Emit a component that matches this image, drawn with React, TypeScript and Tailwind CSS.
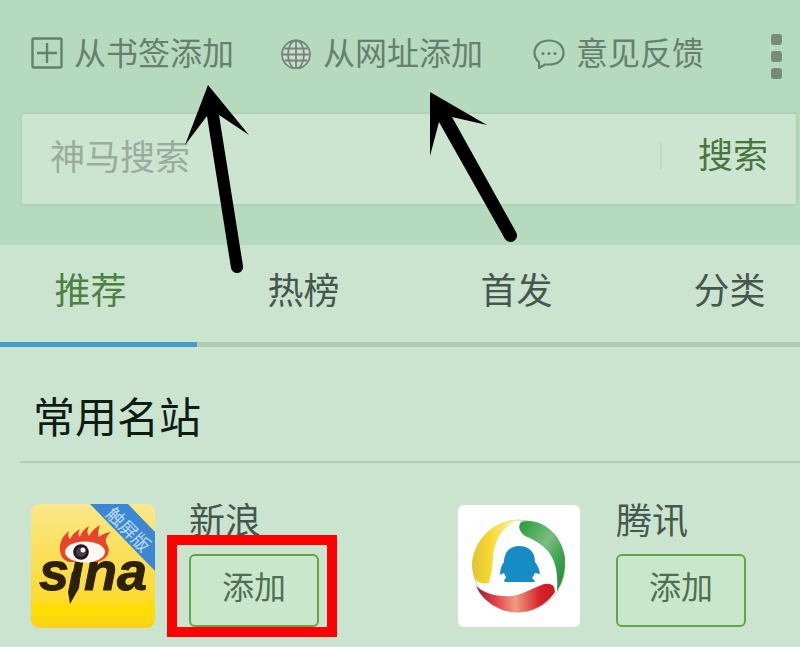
import type { ReactNode } from "react";

function AddSquareIcon() {
  return (
    <svg className="size-8 shrink-0" viewBox="0 0 32 32" fill="none" stroke="currentColor" strokeWidth="2.4" aria-hidden="true">
      <rect x="1.5" y="1.5" width="29" height="29" rx="1.5" />
      <path d="M16 6v20M6 16h20" />
    </svg>
  );
}

function GlobeIcon() {
  return (
    <svg className="size-8 shrink-0" viewBox="0 0 32 32" fill="none" stroke="#738779" strokeWidth="1.8" aria-hidden="true">
      <circle cx="16" cy="17.5" r="14" fill="#cbdccf" />
      <path d="M16 3.500v28M2 17.500h28M4.500 11.500h23M4.500 23.500h23" />
      <ellipse cx="16" cy="17.500" rx="8" ry="14" />
    </svg>
  );
}

function FeedbackIcon() {
  return (
    <svg className="size-8 shrink-0" viewBox="0 0 32 32" fill="none" stroke="currentColor" strokeWidth="2.2" aria-hidden="true">
      <path d="M6 25C3 22.500 1.500 20 1.500 16C1.500 8.500 7.500 3.500 16 3.500S30.500 8.500 30.500 16S24 27.500 16 27.500H12L6 31Z" strokeLinejoin="round" />
      <g fill="currentColor" stroke="none">
        <circle cx="10" cy="16.500" r="1.500" />
        <circle cx="16" cy="16.500" r="1.500" />
        <circle cx="22" cy="16.500" r="1.500" />
      </g>
    </svg>
  );
}

function SinaLogo() {
  return (
    <svg className="size-[124px] rounded-lg" viewBox="0 0 124 124" role="img" aria-label="新浪">
      <defs>
        <linearGradient id="sinaBg" x1="0" y1="0" x2="0" y2="1">
          <stop offset="0" stopColor="#fbe88c" />
          <stop offset="0.4" stopColor="#fbdf5a" />
          <stop offset="0.75" stopColor="#fdda33" />
          <stop offset="0.85" stopColor="#ffdf00" />
          <stop offset="1" stopColor="#fbd01d" />
        </linearGradient>
      </defs>
      <rect width="124" height="124" fill="url(#sinaBg)" />
      <path d="M59 0H97L124 28V67Z" fill="#3c87d4" />
      <text x="97" y="32" transform="rotate(45 97 26)" textAnchor="middle" fontSize="18" fill="#b9dcf8" fontFamily="Noto Sans CJK SC, sans-serif">触屏版</text>
      <text x="8" y="86" fontSize="54" fontWeight="700" fontStyle="italic" fill="#2d210c" stroke="#2d210c" strokeWidth="1" fontFamily="Liberation Sans, Arial, sans-serif">sina</text>
      <path d="M41 68L50 66L48 84L39 100L37 88Z" fill="#2d210c" />
      <path d="M30 51C27 42 30 33 38 27Q36 33 39 35Q42 29 49 25Q46 30 49 33Q51 26 58 22Q55 28 58 32Q61 26 69 21Q66 29 68 33Q72 29 80 28Q73 34 75 39C81 47 77 55 66 58H38Q32 56 30 51Z" fill="#e5452a" />
      <ellipse cx="54" cy="48" rx="20" ry="10.500" fill="#fff8f2" />
      <circle cx="50" cy="48" r="7.800" fill="#1d1722" />
      <circle cx="50" cy="48" r="5" fill="#493b4d" />
      <circle cx="52" cy="46" r="2.500" fill="#fff" />
    </svg>
  );
}

function TencentLogo() {
  return (
    <svg className="my-px size-[122px] rounded-md" viewBox="0 0 122 122" role="img" aria-label="腾讯">
      <defs>
        <linearGradient id="qYellow" x1="0" y1="0" x2="1" y2="0">
          <stop offset="0" stopColor="#dfc33d" />
          <stop offset="0.35" stopColor="#f6d62c" />
          <stop offset="1" stopColor="#fdf5ac" />
        </linearGradient>
        <linearGradient id="qGreen" x1="0" y1="0" x2="1" y2="1">
          <stop offset="0" stopColor="#269a3a" />
          <stop offset="0.45" stopColor="#78be80" />
          <stop offset="0.7" stopColor="#3ba34d" />
          <stop offset="1" stopColor="#24823b" />
        </linearGradient>
        <linearGradient id="qRed" x1="0" y1="0" x2="1" y2="0">
          <stop offset="0" stopColor="#8c2228" />
          <stop offset="0.25" stopColor="#e8404a" />
          <stop offset="0.5" stopColor="#ed9c84" />
          <stop offset="0.8" stopColor="#d8232a" />
          <stop offset="1" stopColor="#c41b24" />
        </linearGradient>
      </defs>
      <rect width="122" height="122" fill="#fff" />
      <circle cx="61" cy="61" r="46" fill="none" stroke="#c9cfa8" strokeWidth="1" />
      <path d="M60 15C37 16 17 32 14 58Q14 68 17 74Q22 80 31 78Q35 62 35 51C37 34 44 22 60 15Z" fill="url(#qYellow)" />
      <path d="M63 17C82 12 104 28 107 53Q108 72 99 86Q101 58 89 45Q80 36 67 31Q58 24 63 17Z" fill="url(#qGreen)" />
      <path d="M18 81C28 90 49 95 65 88Q76 83 86 79Q97 77 97 87C83 108 58 111 42 104Q24 96 18 81Z" fill="url(#qRed)" />
      <path d="M61 41C71 41 77 47 77 57Q81 62 82 69L77 68Q75 72 74 73Q78 76 76 77H47Q45 75 48 73L46 68L42 70Q42 62 46 57C46 47 52 41 61 41Z" fill="#168bc4" />
    </svg>
  );
}

function ToolbarItem({ icon, label, className }: { icon: ReactNode; label: string; className: string }) {
  return (
    <button type="button" className={`flex shrink-0 items-center gap-[11px] whitespace-nowrap text-[32px] leading-12 ${className}`}>
      {icon}
      <span className="pb-1">{label}</span>
    </button>
  );
}

function SiteCard({ name, logo, logoGap, highlighted = false }: { name: string; logo: ReactNode; logoGap: string; highlighted?: boolean }) {
  return (
    <li className={`flex items-start ${logoGap}`}>
      {logo}
      <div>
        <h3 className="-mt-3 mb-2.5 text-[36px] leading-[52px] text-[#46584d]">{name}</h3>
        <div className="relative">
          <button type="button" aria-label={`添加${name}`} className="block rounded-md border-2 border-[#63a544] bg-[#c9e7cb] px-[31px] pt-[5px] pb-4 text-[32px] leading-12 text-[#4d7150]">
            添加
          </button>
          {highlighted && <div className="pointer-events-none absolute -top-[19px] -right-[18px] -bottom-2.5 -left-[22px] border-10 border-[#fe0000]" />}
        </div>
      </div>
    </li>
  );
}

function PointerArrows() {
  return (
    <svg className="pointer-events-none absolute top-0 left-0 h-[280px] w-[520px]" viewBox="0 0 520 280" fill="#000" aria-hidden="true">
      <path d="M208 85L249 135L219 115L243 266A6 6 0 0 1 231 268L207 116L185 145Z" />
      <path d="M430 92L487 125L452 117L516 232A6 6 0 0 1 505 239L439 122L430 156Z" />
    </svg>
  );
}

const tabs = ["推荐", "热榜", "首发", "分类"];

export default function App() {
  return (
    <div className="relative min-h-screen overflow-hidden bg-[#cbe4d0] font-['Noto_Sans_CJK_SC',sans-serif]">
      <header className="bg-[#b5dabd] pb-[39px]">
        <div className="flex items-center pt-[26px] pr-[18px] pb-[33px] pl-[31px] text-[#66806d]">
          <ToolbarItem icon={<AddSquareIcon />} label="从书签添加" className="" />
          <ToolbarItem icon={<GlobeIcon />} label="从网址添加" className="ml-[46px]" />
          <ToolbarItem icon={<FeedbackIcon />} label="意见反馈" className="ml-[50px]" />
          <button type="button" aria-label="更多" className="ml-auto flex flex-col gap-[6px] pt-2">
            <span className="size-[11px] rounded-[3px] bg-[#758c7b]" />
            <span className="size-[11px] rounded-[3px] bg-[#758c7b]" />
            <span className="size-[11px] rounded-[3px] bg-[#758c7b]" />
          </button>
        </div>
        <form className="mr-0.5 ml-5 flex items-center rounded-sm border-2 border-[#b0d2b7] bg-[#cce5d0] pt-4 pb-6" onSubmit={(e) => e.preventDefault()}>
          <input
            type="search"
            aria-label="神马搜索"
            placeholder="神马搜索"
            className="h-[50px] min-w-0 flex-1 bg-transparent pl-7 text-[35px] text-[#46584d] outline-none placeholder:text-[#9aaca0]"
          />
          <span className="h-7 w-0.5 bg-[#c5d6c4]" />
          <button type="submit" className="-mt-1 pr-7 pl-9 text-[35px] leading-[48px] text-[#49763d]">
            搜索
          </button>
        </form>
      </header>

      <nav className="overflow-hidden">
        <div className="-mr-9 -ml-4 flex">
          {tabs.map((tab, i) => (
            <button
              key={tab}
              type="button"
              className={`flex-1 border-b-[5px] pt-[17px] pb-7 text-[36px] leading-[52px] ${i === 0 ? "border-[#459bca] text-[#4d8043]" : "border-[#afcdb4] text-[#46584d]"}`}
            >
              {tab}
            </button>
          ))}
        </div>
      </nav>

      <main>
        <h2 className="ml-5 border-b-2 border-[#b0ceb5] pt-[38px] pb-4 pl-[13px] text-[42px] leading-[60px] text-[#0e1d14]">常用名站</h2>
        <ul className="grid grid-cols-[427px_1fr] pt-[41px] pl-[31px]">
          <SiteCard name="新浪" logo={<SinaLogo />} logoGap="gap-[34px]" highlighted />
          <SiteCard name="腾讯" logo={<TencentLogo />} logoGap="gap-9" />
        </ul>
      </main>

      <PointerArrows />
    </div>
  );
}
